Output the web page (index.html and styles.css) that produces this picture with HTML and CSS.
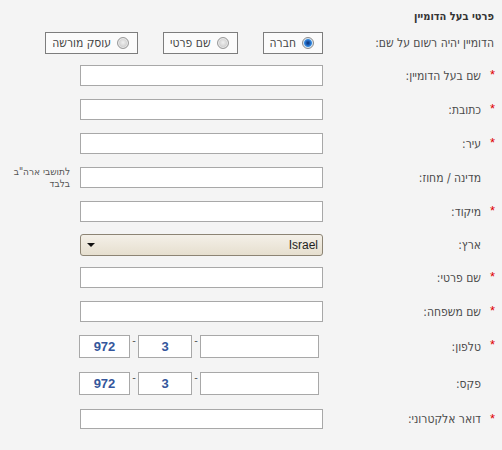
FILE: index.html
```html
<!DOCTYPE html>
<html lang="he" dir="rtl">
<head>
    <meta charset="UTF-8">
    <title>פרטי בעל הדומיין</title>
    <link rel="stylesheet" href="styles.css">
</head>
<body>
    <div class="form">
        <h2 class="title">פרטי בעל הדומיין</h2>

        <div class="row row-radio">
            <span class="label label-wide">הדומיין יהיה רשום על שם:</span>
            <div class="radios">
                <label class="radio-box"><span class="radio checked"></span>חברה</label>
                <label class="radio-box"><span class="radio"></span>שם פרטי</label>
                <label class="radio-box"><span class="radio"></span>עוסק מורשה</label>
            </div>
        </div>

        <div class="row">
            <span class="req">*</span>
            <label class="label">שם בעל הדומיין:</label>
            <input class="text" type="text">
        </div>

        <div class="row">
            <span class="req">*</span>
            <label class="label">כתובת:</label>
            <input class="text" type="text">
        </div>

        <div class="row">
            <span class="req">*</span>
            <label class="label">עיר:</label>
            <input class="text" type="text">
        </div>

        <div class="row">
            <span class="req"></span>
            <label class="label">מדינה / מחוז:</label>
            <input class="text" type="text">
            <div class="note">לתושבי ארה"ב<br>בלבד</div>
        </div>

        <div class="row row-zip">
            <span class="req">*</span>
            <label class="label">מיקוד:</label>
            <input class="text" type="text">
        </div>

        <div class="row row-select">
            <span class="req"></span>
            <label class="label">ארץ:</label>
            <div class="select-wrap">
                <select class="select">
                    <option>Israel</option>
                </select>
            </div>
        </div>

        <div class="row">
            <span class="req">*</span>
            <label class="label">שם פרטי:</label>
            <input class="text" type="text">
        </div>

        <div class="row">
            <span class="req">*</span>
            <label class="label">שם משפחה:</label>
            <input class="text" type="text">
        </div>

        <div class="row row-phone">
            <span class="req">*</span>
            <label class="label">טלפון:</label>
            <div class="phone">
                <input class="text code" type="text" value="972">
                <span class="dash">-</span>
                <input class="text area" type="text" value="3">
                <span class="dash">-</span>
                <input class="text number" type="text">
            </div>
        </div>

        <div class="row row-phone">
            <span class="req"></span>
            <label class="label">פקס:</label>
            <div class="phone">
                <input class="text code" type="text" value="972">
                <span class="dash">-</span>
                <input class="text area" type="text" value="3">
                <span class="dash">-</span>
                <input class="text number" type="text">
            </div>
        </div>

        <div class="row row-email">
            <span class="req">*</span>
            <label class="label">דואר אלקטרוני:</label>
            <input class="text" type="text">
        </div>
    </div>
</body>
</html>
```

FILE: styles.css
```css
/* Reset */
* {
    margin: 0;
    padding: 0;
    box-sizing: border-box;
}

body {
    background: #f4f4f4;
    color: #4a4a4a;
    font-family: 'DejaVu Sans Condensed', 'DejaVu Sans', sans-serif;
    font-size: 12px;
    direction: rtl;
}

.form {
    padding: 9px 6px 0 8px;
}

/* Section title */
.title {
    font-size: 11px;
    font-weight: 700;
    line-height: 16px;
    color: #333;
    margin-bottom: 7px;
    padding-right: 2px;
}

/* One form line: star | label | field | note */
.row {
    display: grid;
    grid-template-columns: 15px 158px 243px 1fr;
    align-items: center;
    margin-bottom: 13px;
}

.row-radio { margin-bottom: 11px; }
.row-zip { margin-bottom: 12px; }
.row-select { margin-bottom: 11px; }
.row-phone { margin-bottom: 14px; }

.req {
    color: #e00000;
    font-family: 'Liberation Sans', Arial, sans-serif;
    font-size: 13px;
    line-height: 16px;
    text-align: right;
    padding-right: 1px;
    align-self: start;
    margin-top: 2px;
}

.label {
    line-height: 16px;
    white-space: nowrap;
}

.label-wide {
    grid-column: 1 / 3;
    padding-right: 2px;
}

/* Radio choices */
.radios {
    grid-column: 3 / 5;
    display: flex;
    gap: 25px;
}

.radio-box {
    display: flex;
    align-items: center;
    gap: 6px;
    height: 22px;
    padding: 0 8px 0 6px;
    border: 1px solid #7d7d7d;
    background: #fbfbfb;
    color: #444;
    white-space: nowrap;
}

.radio {
    width: 12px;
    height: 12px;
    border-radius: 50%;
    border: 1px solid #9a9a9a;
    background: radial-gradient(circle at 50% 45%, #f0f0f0 0%, #d2d2d2 55%, #b9b9b9 100%);
    box-shadow: inset 0 0 0 1px #ececec;
}

.radio.checked {
    border-color: #8a8a8a;
    background: radial-gradient(circle at 50% 50%, #0b2f6e 0%, #1d5fb8 30%, #3b8ee0 50%, #d6e6f5 62%, #e8e8e8 100%);
    box-shadow: none;
}

/* Text fields */
.text {
    height: 21px;
    width: 243px;
    border: 1px solid #a8a8a8;
    background: #fff;
    font-family: 'Liberation Sans', Arial, sans-serif;
    font-size: 13px;
    outline: none;
}

.note {
    height: 21px;
    display: flex;
    flex-direction: column;
    justify-content: center;
    padding-right: 10px;
    font-size: 10px;
    line-height: 12px;
    color: #555;
    white-space: nowrap;
}

/* Country select */
.select-wrap {
    position: relative;
    width: 243px;
    height: 22px;
}

.select {
    appearance: none;
    -webkit-appearance: none;
    width: 100%;
    height: 100%;
    border: 1px solid #8c8474;
    border-radius: 3px;
    background: linear-gradient(#f4f0e8, #e6dfcf);
    font-family: 'Liberation Sans', Arial, sans-serif;
    font-size: 12px;
    color: #1e1e1e;
    padding: 0 4px 0 20px;
    direction: rtl;
    outline: none;
}

.select-wrap::after {
    content: '';
    position: absolute;
    left: 7px;
    top: 9px;
    border-left: 4px solid transparent;
    border-right: 4px solid transparent;
    border-top: 4px solid #111;
    pointer-events: none;
}

/* Phone / fax */
.phone {
    display: flex;
    direction: ltr;
    margin-left: -1px;
}

.phone .text {
    height: 23px;
    text-align: center;
    font-weight: 700;
    color: #34569c;
    font-size: 13px;
}

.phone .code { width: 51px; }
.phone .area { width: 54px; }
.phone .number { width: 119px; }

.dash {
    width: 8px;
    text-align: center;
    font-size: 11px;
    line-height: 12px;
    color: #555;
    align-self: flex-start;
}

.row-email .text {
    height: 20px;
}
```
